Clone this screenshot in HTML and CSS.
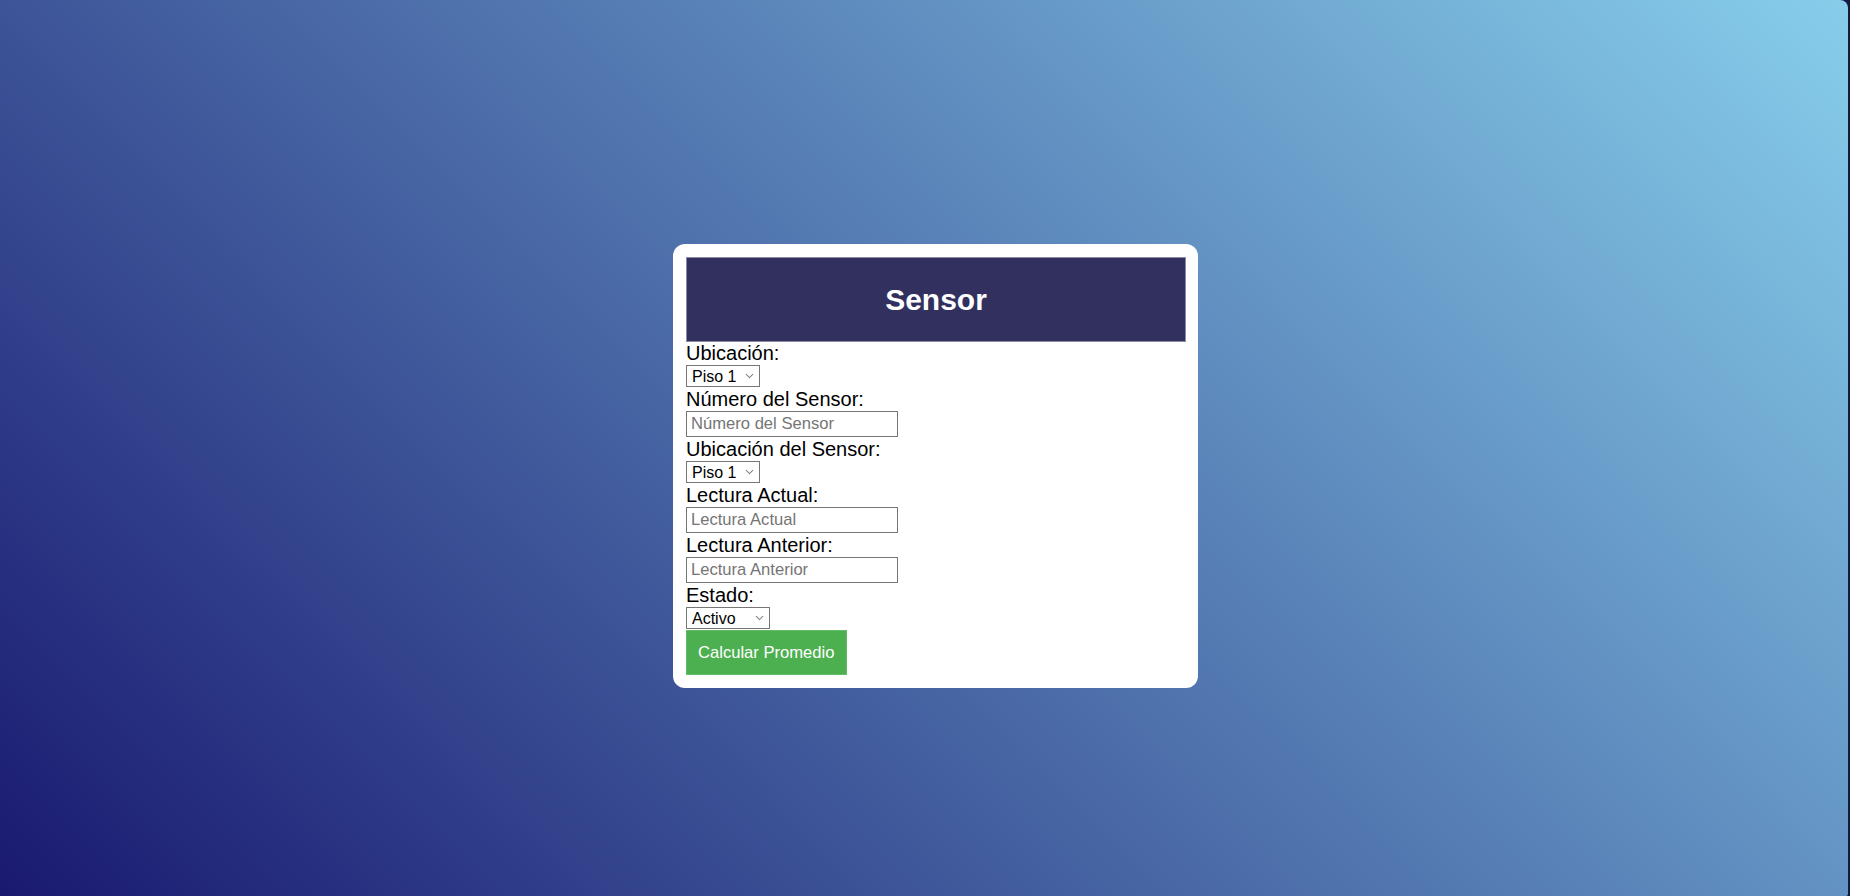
FILE: index.html
```html
<!DOCTYPE html>
<html lang="es">
<head>
<meta charset="utf-8">
<title>Sensor</title>
<link rel="stylesheet" href="styles.css">
</head>
<body>
<main class="page">
  <div class="card">
    <h1 class="title">Sensor</h1>
    <form class="form">
      <label class="field-label" for="ubicacion">Ubicación:</label>
      <select id="ubicacion" class="select select-piso">
        <option>Piso 1</option>
        <option>Piso 2</option>
        <option>Piso 3</option>
      </select>
      <label class="field-label" for="numero">Número del Sensor:</label>
      <input id="numero" class="text-input" type="text" placeholder="Número del Sensor">
      <label class="field-label" for="ubicacion-sensor">Ubicación del Sensor:</label>
      <select id="ubicacion-sensor" class="select select-piso">
        <option>Piso 1</option>
        <option>Piso 2</option>
        <option>Piso 3</option>
      </select>
      <label class="field-label" for="actual">Lectura Actual:</label>
      <input id="actual" class="text-input" type="text" placeholder="Lectura Actual">
      <label class="field-label" for="anterior">Lectura Anterior:</label>
      <input id="anterior" class="text-input" type="text" placeholder="Lectura Anterior">
      <label class="field-label" for="estado">Estado:</label>
      <select id="estado" class="select select-estado">
        <option>Activo</option>
        <option>Inactivo</option>
      </select>
      <button type="button" class="btn">Calcular Promedio</button>
    </form>
  </div>
</main>
</body>
</html>
```

FILE: styles.css
```css
html {
  background: #151a45;
  height: 100%;
}

body {
  margin: 0 2px 0 0;
  min-height: 100vh;
  border-top-right-radius: 8px;
  border-bottom-right-radius: 2px;
  background: linear-gradient(45deg, #191970, #87ceeb);
  font-family: "Liberation Sans", Arial, sans-serif;
  color: #000;
}

.page {
  min-height: 100vh;
  box-sizing: border-box;
  padding: 36px 0 0 23px;
  display: flex;
  align-items: center;
  justify-content: center;
}

.card {
  width: 500px;
  background: #fff;
  border-radius: 12px;
  padding: 13px 12px 13px 13px;
}

.title {
  margin: 0;
  padding: 25px 0;
  background: #32305f;
  border: 1px solid #8c8aa8;
  color: #fff;
  font-size: 30px;
  line-height: 33px;
  font-weight: bold;
  text-align: center;
}

.form {
  display: flex;
  flex-direction: column;
  align-items: flex-start;
}

.field-label {
  font-size: 20px;
  line-height: 23px;
  height: 23px;
}

.select {
  box-sizing: border-box;
  height: 22px;
  margin: 0 0 1px 0;
  padding: 0 0 0 5px;
  font-family: "Liberation Sans", Arial, sans-serif;
  font-size: 16px;
  border: 1px solid #767676;
  border-radius: 0;
  color: #000;
  -webkit-appearance: none;
  appearance: none;
  background: #fff url("data:image/svg+xml,%3Csvg xmlns='http://www.w3.org/2000/svg' width='9' height='6' viewBox='0 0 9 6'%3E%3Cpath d='M1 1.2 L4.5 4.6 L8 1.2' fill='none' stroke='%23808080' stroke-width='1.1'/%3E%3C/svg%3E") no-repeat right 5px center;
}

.select-piso {
  width: 74px;
}

.select-estado {
  width: 84px;
}

.text-input {
  box-sizing: border-box;
  width: 212px;
  height: 26px;
  margin: 0 0 1px 0;
  padding: 1px 4px;
  border: 1px solid #767676;
  border-radius: 0;
  font-family: "Liberation Sans", Arial, sans-serif;
  font-size: 16.6px;
  color: #000;
}

.text-input::placeholder {
  color: #757575;
}

.btn {
  box-sizing: border-box;
  height: 45px;
  padding: 0 11px;
  border: 1px solid #63bd66;
  background: #4caf50;
  color: #fff;
  font-family: "Liberation Sans", Arial, sans-serif;
  font-size: 16.6px;
  cursor: pointer;
}
```
